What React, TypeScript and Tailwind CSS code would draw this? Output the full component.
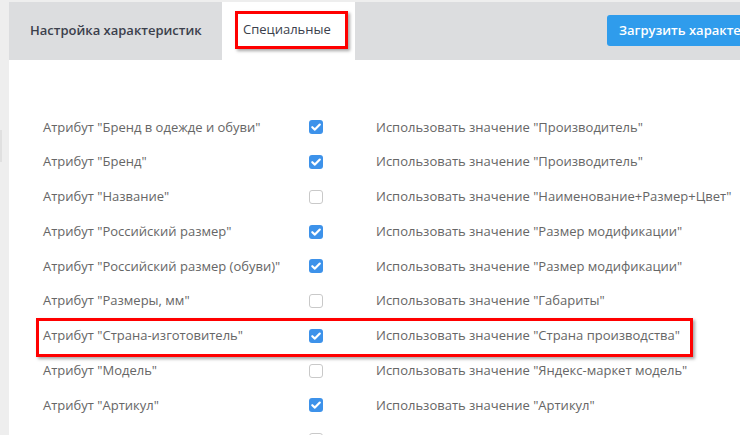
const rows: { attr: string; checked: boolean; value: string; marked?: boolean }[] = [
  { attr: 'Атрибут "Бренд в одежде и обуви"', checked: true, value: 'Использовать значение "Производитель"' },
  { attr: 'Атрибут "Бренд"', checked: true, value: 'Использовать значение "Производитель"' },
  { attr: 'Атрибут "Название"', checked: false, value: 'Использовать значение "Наименование+Размер+Цвет"' },
  { attr: 'Атрибут "Российский размер"', checked: true, value: 'Использовать значение "Размер модификации"' },
  { attr: 'Атрибут "Российский размер (обуви)"', checked: true, value: 'Использовать значение "Размер модификации"' },
  { attr: 'Атрибут "Размеры, мм"', checked: false, value: 'Использовать значение "Габариты"' },
  { attr: 'Атрибут "Страна-изготовитель"', checked: true, value: 'Использовать значение "Страна производства"', marked: true },
  { attr: 'Атрибут "Модель"', checked: false, value: 'Использовать значение "Яндекс-маркет модель"' },
  { attr: 'Атрибут "Артикул"', checked: true, value: 'Использовать значение "Артикул"' },
  { attr: "", checked: false, value: "" },
];

function Checkbox({ checked }: { checked: boolean }) {
  if (!checked) {
    return <span className="block h-[14px] w-[14px] rounded-[3px] border border-[#c9c9c9] bg-white" />;
  }
  return (
    <span className="flex h-[14px] w-[14px] items-center justify-center rounded-[3px] bg-[#3d92ea]">
      <svg viewBox="0 0 14 14" className="h-[14px] w-[14px]">
        <path d="M3.3 7.2 L5.9 9.6 L10.8 4.6" fill="none" stroke="#fff" strokeWidth="2.2" strokeLinecap="round" strokeLinejoin="round" />
      </svg>
    </span>
  );
}

export default function App() {
  return (
    <div
      className="flex h-[435px] w-[740px] overflow-hidden bg-[#eeeeee] text-[13px]"
      style={{ fontFamily: '"Open Sans", "Noto Sans", sans-serif' }}
    >
      <aside className="flex w-[9px] shrink-0 flex-col pt-[130px]">
        <div className="h-[32px] w-[2px] bg-[#e0e0e0]" />
      </aside>

      <main className="flex min-w-0 flex-1 flex-col overflow-hidden pt-[2px]">
        <nav className="flex h-[58px] shrink-0 items-start overflow-hidden bg-[#dcdddf]">
          <div className="flex h-full w-[213px] shrink-0 items-center pl-[21px] font-semibold text-[#3b404c]">
            Настройка характеристик
          </div>
          <div className="flex h-full w-[133px] shrink-0 items-start bg-white pl-[13px] pt-[9px]">
            <span className="flex h-[38px] w-[113px] items-center border-[3px] border-[#ff0000] pl-[5px] text-[#3b404c] shadow-[2px_2px_3px_rgba(0,0,0,0.35)]">
              Специальные
            </span>
          </div>
          <button
            type="button"
            className="ml-[252px] mt-[13px] flex h-[31px] shrink-0 items-center whitespace-nowrap rounded-[3px] bg-[#2f9cec] px-[12px] font-semibold text-white"
          >
            Загрузить характеристики
          </button>
        </nav>

        <section className="flex-1 bg-white pt-[50px]">
          {rows.map((r, i) => (
            <div key={i} className="relative flex h-[34.75px] items-center text-[#666666]">
              {r.marked && (
                <span className="absolute left-[27px] top-[-1px] h-[39px] w-[657px] border-[3px] border-[#ff0000] shadow-[2px_2px_3px_rgba(0,0,0,0.35)]" />
              )}
              <span className="w-[300px] shrink-0 pl-[34px]">{r.attr}</span>
              <span className="w-[67px] shrink-0">
                <Checkbox checked={r.checked} />
              </span>
              <span>{r.value}</span>
            </div>
          ))}
        </section>
      </main>
    </div>
  );
}
